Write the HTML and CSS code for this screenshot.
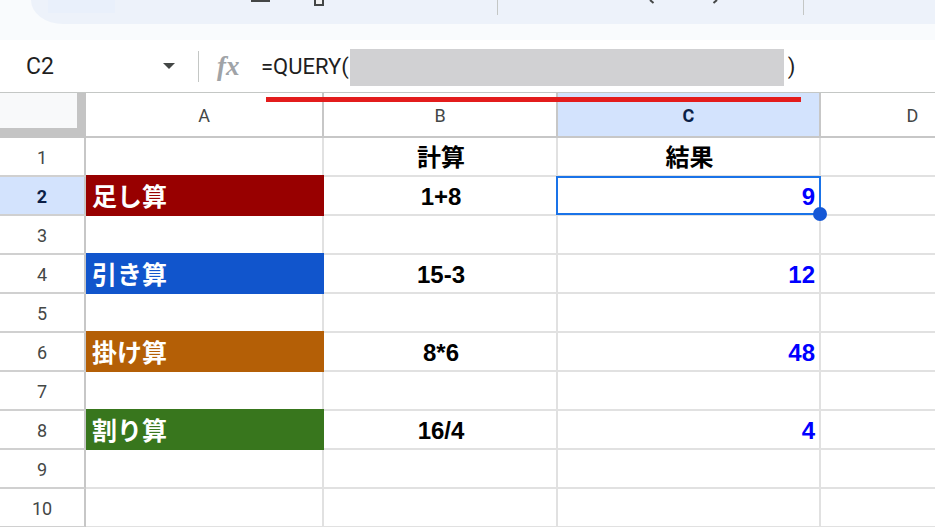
FILE: index.html
```html
<!DOCTYPE html>
<html lang="ja">
<head>
<meta charset="utf-8">
<title>Sheet</title>
<link rel="stylesheet" href="styles.css">
</head>
<body>
<div class="app">
  <header class="topbar">
    <div class="toolbar">
      <span class="tb-hl"></span>
      <span class="tb-bar"></span>
      <span class="tb-paint"></span>
      <span class="tb-div tb-d1"></span>
      <svg class="tb-chev tb-c1" width="6" height="4" viewBox="0 0 6 4"><path d="M1 0 L4.5 3" stroke="#444746" stroke-width="2" fill="none"/></svg>
      <svg class="tb-chev tb-c2" width="6" height="4" viewBox="0 0 6 4"><path d="M5 0 L1.5 3" stroke="#444746" stroke-width="2" fill="none"/></svg>
      <span class="tb-div tb-d2"></span>
    </div>
  </header>

  <div class="formula">
    <div class="namebox">C2</div>
    <svg class="dd" width="12" height="6" viewBox="0 0 12 6"><path d="M0 0 H12 L6 6 Z" fill="#444746"/></svg>
    <span class="fdiv"></span>
    <span class="fx">fx</span>
    <div class="ftext"><span>=QUERY(</span><span class="redact"></span><span>)</span></div>
  </div>

  <div class="sheet">
    <div class="grid">
      <div class="corner"></div>
      <div class="ch">A</div>
      <div class="ch">B</div>
      <div class="ch sel">C</div>
      <div class="ch">D</div>

      <div class="rh">1</div>
      <div class="c"></div>
      <div class="c center">計算</div>
      <div class="c center">結果</div>
      <div class="c"></div>

      <div class="rh sel">2</div>
      <div class="c fill red">足し算</div>
      <div class="c center">1+8</div>
      <div class="c num">9</div>
      <div class="c"></div>

      <div class="rh">3</div>
      <div class="c"></div>
      <div class="c"></div>
      <div class="c"></div>
      <div class="c"></div>

      <div class="rh">4</div>
      <div class="c fill blue">引き算</div>
      <div class="c center">15-3</div>
      <div class="c num">12</div>
      <div class="c"></div>

      <div class="rh">5</div>
      <div class="c"></div>
      <div class="c"></div>
      <div class="c"></div>
      <div class="c"></div>

      <div class="rh">6</div>
      <div class="c fill orange">掛け算</div>
      <div class="c center">8*6</div>
      <div class="c num">48</div>
      <div class="c"></div>

      <div class="rh">7</div>
      <div class="c"></div>
      <div class="c"></div>
      <div class="c"></div>
      <div class="c"></div>

      <div class="rh">8</div>
      <div class="c fill green">割り算</div>
      <div class="c center">16/4</div>
      <div class="c num">4</div>
      <div class="c"></div>

      <div class="rh">9</div>
      <div class="c"></div>
      <div class="c"></div>
      <div class="c"></div>
      <div class="c"></div>

      <div class="rh">10</div>
      <div class="c"></div>
      <div class="c"></div>
      <div class="c"></div>
      <div class="c"></div>
    </div>
    <div class="selection"></div>
    <div class="handle"></div>
  </div>

  <div class="redline"></div>
</div>
</body>
</html>
```

FILE: styles.css
```css
html, body {
  margin: 0;
  padding: 0;
}

body {
  width: 935px;
  height: 527px;
  overflow: hidden;
  background: #f9fbfd;
  font-family: Roboto, "Noto Sans CJK JP", sans-serif;
}

.app {
  position: relative;
  width: 935px;
  height: 527px;
  overflow: hidden;
}

/* ---------- top toolbar (cropped) ---------- */
.topbar {
  height: 40px;
}

.toolbar {
  margin-left: 31px;
  height: 24px;
  background: #edf2fa;
  border-bottom-left-radius: 32px 24px;
  display: flex;
  align-items: flex-start;
}

.tb-hl {
  margin-left: 17px;
  width: 67px;
  height: 13px;
  background: #e9f0fb;
}

.tb-bar {
  margin-left: 136px;
  width: 19px;
  height: 2px;
  background: #444746;
}

.tb-paint {
  margin-left: 44px;
  width: 6px;
  height: 4px;
  border: 2px solid #444746;
  border-top: 0;
  background: #f2f2f2;
}

.tb-div {
  width: 1px;
  height: 15px;
  background: #c4c7c5;
}

.tb-d1 { margin-left: 173px; }

.tb-c1 { margin-left: 151px; }
.tb-c2 { margin-left: 57px; }

.tb-d2 { margin-left: 85px; }

/* ---------- formula bar ---------- */
.formula {
  height: 52px;
  background: #ffffff;
  border-bottom: 1px solid #c4c7c5;
  display: flex;
  align-items: center;
  color: #1f1f1f;
}

.namebox {
  width: 163px;
  box-sizing: border-box;
  padding-left: 26px;
  font-size: 23px;
}

.dd {
  flex: none;
}

.fdiv {
  margin-left: 23px;
  width: 1px;
  height: 31px;
  background: #c4c7c5;
}

.fx {
  margin-left: 18px;
  width: 28px;
  font-family: "Liberation Serif", "DejaVu Serif", serif;
  font-style: italic;
  font-weight: bold;
  font-size: 27px;
  color: #a0a3a7;
  line-height: 1;
}

.ftext {
  margin-left: 16px;
  display: flex;
  align-items: center;
  font-size: 22px;
}

.redact {
  width: 434px;
  height: 37px;
  margin: 2px 4px 0 1px;
  background: #d1d1d3;
}

/* ---------- sheet grid ---------- */
.sheet {
  position: relative;
  background: #ffffff;
}

.grid {
  display: grid;
  grid-template-columns: 86px 238px 234px 263px 185px;
  grid-template-rows: 45px repeat(10, 39px);
}

.grid > div {
  box-sizing: border-box;
  display: flex;
  align-items: center;
  overflow: hidden;
  white-space: nowrap;
}

.corner {
  background: #f8f9fa;
  border-right: 9px solid #c4c4c4;
  border-bottom: 10px solid #c4c4c4;
}

.ch {
  justify-content: center;
  border-right: 2px solid #c7c7c7;
  border-bottom: 2px solid #c7c7c7;
  font-size: 18px;
  color: #444746;
  padding-top: 2px;
}

.rh {
  justify-content: center;
  border-right: 2px solid #c7c7c7;
  border-bottom: 2px solid #d0d0d0;
  font-size: 18px;
  color: #444746;
  padding-top: 2px;
}

.ch.sel,
.rh.sel {
  background: #d3e3fd;
  color: #0b1f47;
  font-weight: bold;
}

.c {
  border-right: 2px solid #e1e1e1;
  border-bottom: 2px solid #e1e1e1;
  padding: 3px 4px 0 6px;
  font-family: "Liberation Sans", Arial, "Noto Sans CJK JP", sans-serif;
  font-weight: bold;
  font-size: 24px;
  line-height: 24px;
  color: #000000;
}

.c.center { justify-content: center; }

.c.num {
  justify-content: flex-end;
  color: #0000ff;
}

.c.fill {
  color: #ffffff;
  font-size: 25px;
  padding-left: 6px;
}

.c.red    { background: #980000; border-color: #980000; box-shadow: 0 -2px 0 #980000; }
.c.blue   { background: #1155cc; border-color: #1155cc; box-shadow: 0 -2px 0 #1155cc; }
.c.orange { background: #b45f06; border-color: #b45f06; box-shadow: 0 -2px 0 #b45f06; }
.c.green  { background: #38761d; border-color: #38761d; box-shadow: 0 -2px 0 #38761d; }

/* ---------- overlays ---------- */
.selection {
  position: absolute;
  left: 556px;
  top: 83px;
  width: 265px;
  height: 39px;
  box-sizing: border-box;
  border: 2px solid #1a73e8;
}

.handle {
  position: absolute;
  left: 813px;
  top: 114px;
  width: 14px;
  height: 14px;
  border-radius: 50%;
  background: #1558d6;
}

.redline {
  position: absolute;
  left: 266px;
  top: 97px;
  width: 535px;
  height: 5px;
  background: #e31c1c;
}
```
